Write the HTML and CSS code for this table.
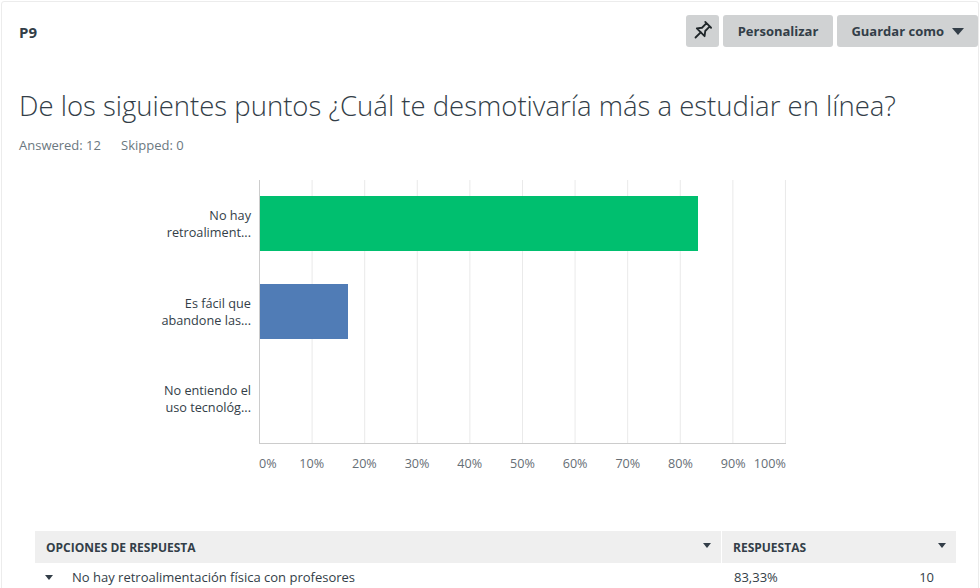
FILE: index.html
```html
<!DOCTYPE html>
<html lang="es">
<head>
<meta charset="utf-8">
<title>P9</title>
<link rel="stylesheet" href="styles.css">
</head>
<body>
<div class="card">
  <div class="head">
    <div class="qnum">P9</div>
    <div class="actions">
      <button class="btn pin" aria-label="Fijar">
        <svg width="22" height="22" viewBox="0 0 24 24" fill="none" stroke="#1f2629" stroke-width="2" stroke-linejoin="round" stroke-linecap="round">
          <g transform="rotate(45 12 12)">
            <path d="M7.5 2.5 H16.5 M9.5 2.5 V9.5 L6 14 H18 L14.5 9.5 V2.5"/>
            <path d="M12 14 V22"/>
          </g>
        </svg>
      </button>
      <button class="btn">Personalizar</button>
      <button class="btn save">Guardar como <span class="caret"></span></button>
    </div>
  </div>
  <h1 class="title">De los siguientes puntos ¿Cuál te desmotivaría más a estudiar en línea?</h1>
  <div class="stats"><span>Answered: 12</span><span>Skipped: 0</span></div>

  <div class="chart">
    <div class="cats">
      <div class="cat">No hay<br>retroaliment...</div>
      <div class="cat">Es fácil que<br>abandone las...</div>
      <div class="cat">No entiendo el<br>uso tecnológ...</div>
    </div>
    <div class="plotwrap">
      <div class="plot">
        <div class="row"><div class="bar green" style="width:83.33%"></div></div>
        <div class="row"><div class="bar blue" style="width:16.67%"></div></div>
        <div class="row"><div class="bar" style="width:0%"></div></div>
      </div>
      <div class="ticks">
        <span class="tick first"><span>0%</span></span>
        <span class="tick"><span>10%</span></span>
        <span class="tick"><span>20%</span></span>
        <span class="tick"><span>30%</span></span>
        <span class="tick"><span>40%</span></span>
        <span class="tick"><span>50%</span></span>
        <span class="tick"><span>60%</span></span>
        <span class="tick"><span>70%</span></span>
        <span class="tick"><span>80%</span></span>
        <span class="tick"><span>90%</span></span>
        <span class="tick last"><span>100%</span></span>
      </div>
    </div>
  </div>

  <div class="table">
    <div class="thead">
      <div class="th c1">OPCIONES DE RESPUESTA <span class="sort"></span></div>
      <div class="th c2">RESPUESTAS <span class="sort"></span></div>
    </div>
    <div class="trow">
      <div class="td c1"><span class="expand"></span>No hay retroalimentación física con profesores</div>
      <div class="td c2"><span>83,33%</span><span>10</span></div>
    </div>
  </div>
</div>
</body>
</html>
```
FILE: styles.css
```css
* { box-sizing: border-box; }
html, body { margin: 0; padding: 0; }
body {
  background: #ffffff;
  font-family: "Open Sans", "Liberation Sans", Arial, sans-serif;
  color: #333e48;
  width: 980px;
  height: 588px;
  overflow: hidden;
}
.card {
  margin: 1px 0 0 1px;
  width: 978px;
  height: 700px;
  border: 1px solid #ececec;
  border-radius: 3px;
  background: #fff;
  padding: 0 0 0 17px;
}
.head {
  display: flex;
  justify-content: space-between;
  align-items: center;
  padding-top: 13px;
  padding-right: 0;
}
.qnum {
  font-size: 15px;
  font-weight: 700;
  color: #333e48;
  letter-spacing: 0.2px;
  margin-top: 2px;
}
.actions { display: flex; gap: 4px; }
.btn {
  height: 32px;
  border: none;
  border-radius: 3px;
  background: #d0d2d3;
  color: #333e48;
  font-family: "Open Sans", "Liberation Sans", Arial, sans-serif;
  font-weight: 700;
  font-size: 13px;
  padding: 0 15px;
  display: flex;
  align-items: center;
  gap: 7px;
}
.btn.save { gap: 8px; padding: 0 14px; }
.btn.pin { width: 33px; padding: 0; justify-content: center; }
.caret {
  width: 0; height: 0;
  border-left: 6px solid transparent;
  border-right: 6px solid transparent;
  border-top: 7px solid #333e48;
}
.title {
  margin: 42px 0 0 0;
  font-size: 27.5px;
  font-weight: 300;
  line-height: 34px;
  color: #333e48;
  letter-spacing: 0;
}
.stats {
  margin-top: 13px;
  font-size: 13px;
  color: #6b787f;
  display: flex;
  gap: 20px;
}
.chart {
  margin-top: 26px;
  display: flex;
}
.cats {
  width: 232px;
  height: 263px;
  display: flex;
  flex-direction: column;
  margin-right: 8px;
}
.cat {
  flex: 1;
  display: flex;
  align-items: center;
  justify-content: flex-end;
  text-align: right;
  font-size: 12.7px;
  line-height: 17px;
  color: #333e48;
}
.plotwrap { width: 527px; }
.plot {
  height: 264px;
  border-left: 1px solid #cccccc;
  border-bottom: 1px solid #cccccc;
  display: flex;
  flex-direction: column;
  background-image: linear-gradient(to left, #e9e9e9 1px, transparent 1px);
  background-size: 10% 100%;
}
.row {
  flex: 1;
  display: flex;
  align-items: center;
}
.bar { height: 55px; }
.green { background: #00bf6f; }
.blue { background: #507cb6; }
.ticks {
  margin-top: 11px;
  display: flex;
  justify-content: space-between;
  font-size: 12.6px;
  color: #666e75;
}
.tick {
  width: 0;
  display: flex;
  justify-content: center;
  white-space: nowrap;
}
.tick.first { justify-content: flex-start; }
.tick.last { justify-content: flex-end; }
.table {
  margin: 59px 0 0 16px;
  width: 921px;
}
.thead {
  display: flex;
  background: #efefef;
  height: 32px;
}
.th {
  display: flex;
  align-items: center;
  justify-content: space-between;
  font-size: 12px;
  font-weight: 700;
  color: #333e48;
  padding: 0 10px 0 11px;
}
.thead .c1 { width: 687px; border-right: 1px solid #ffffff; }
.thead .c2 { flex: 1; }
.sort {
  width: 0; height: 0;
  border-left: 4.5px solid transparent;
  border-right: 4.5px solid transparent;
  border-top: 5px solid #333e48;
  margin-top: -4px;
}
.trow {
  display: flex;
  height: 28px;
  align-items: center;
  font-size: 13px;
  color: #333e48;
}
.td.c1 {
  width: 688px;
  display: flex;
  align-items: center;
  padding-left: 10px;
}
.expand {
  width: 0; height: 0;
  border-left: 4.5px solid transparent;
  border-right: 4.5px solid transparent;
  border-top: 5px solid #333e48;
  margin-right: 19px;
}
.td.c2 {
  flex: 1;
  display: flex;
  justify-content: space-between;
  padding: 0 22px 0 11px;
}
```
